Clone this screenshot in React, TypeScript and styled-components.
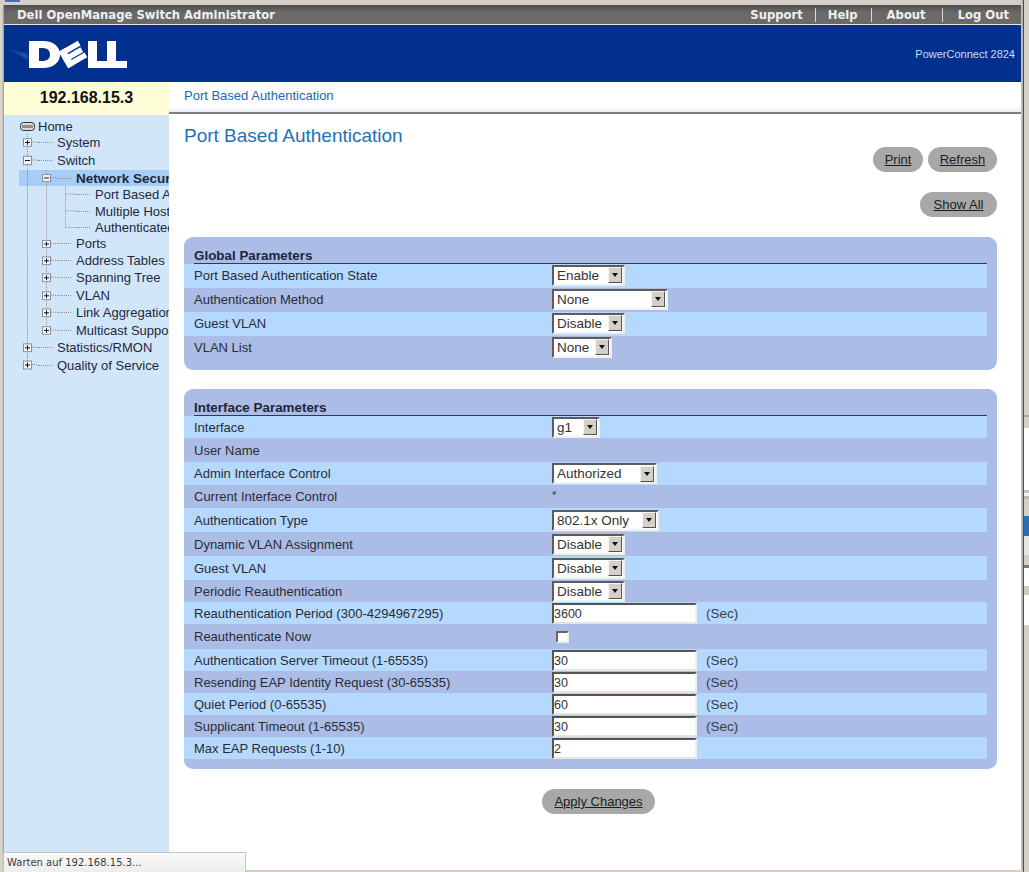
import React from "react";
import styled, { createGlobalStyle } from "styled-components";

const Global = createGlobalStyle`
  html, body { margin: 0; padding: 0; height: 872px; overflow: hidden; background: #d4d0c8; }
  * { box-sizing: border-box; }
  body { font-family: "Liberation Sans", Arial, sans-serif; }
`;

const Shell = styled.div`
  position: relative; width: 1029px; height: 872px; display: flex; overflow: hidden; background: #d4d0c8;
`;
const LeftEdge = styled.div`
  width: 4px; flex: none; background: linear-gradient(90deg, #d8d4cc 0, #d8d4cc 2px, #b9b6ae 3px, #8f8d88 4px);
`;
const WindowFrame = styled.div`
  width: 1017px; flex: none; display: flex; flex-direction: column; height: 870px;
`;
const TopStrip = styled.div`
  height: 5px; flex: none; background: #d4d0c8; margin-left: -4px; padding-left: 5px;
`;
const TabIcon = styled.div`
  width: 15px; height: 2px; background: #4a6fb8;
`;
const TitleBar = styled.div`
  height: 20px; flex: none; display: flex; align-items: center; justify-content: space-between;
  background: linear-gradient(#4e4e4e, #6a6a68 40%, #6a6a68); border-bottom: 1px solid #e6e6e6;
  color: #f0f0ee; font: bold 11.6px "DejaVu Sans", Verdana, sans-serif; padding-left: 13px;
`;
const AppName = styled.span`
  letter-spacing: 0;
`;
const NavList = styled.nav`
  display: flex; align-items: center; height: 100%;
`;
const NavItem = styled.span<{ $l: number; $r: number; $sep?: boolean }>`
  padding: 0 ${(p) => p.$r}px 0 ${(p) => p.$l}px; white-space: nowrap; height: 14px; line-height: 14px;
  border-right: ${(p) => (p.$sep ? "1px solid #d8d8d8" : "0")};
`;
const Brand = styled.header`
  height: 57px; flex: none; display: flex; align-items: center; justify-content: space-between;
  background: #01308f; padding-right: 6px;
`;
const Logo = styled.svg`
  width: 132px; height: 57px; display: block;
`;
const Model = styled.span`
  font-size: 11px; color: #c9dcf4;
`;
const Split = styled.div`
  flex: 1; display: flex; min-height: 0;
`;
const Side = styled.aside`
  width: 165px; flex: none; display: flex; flex-direction: column; overflow: hidden; background: #d2e6fa;
`;
const IpCell = styled.div`
  height: 33px; flex: none; background: #fdfdd8; display: flex; align-items: center; justify-content: center;
  font-size: 16px; font-weight: bold; color: #111; padding-bottom: 1px;
`;
const Tree = styled.div`
  padding: 3px 0 0 15px; width: 165px; color: #22283a; font-size: 13px;
`;
const TreeRow = styled.div<{ $h: number; $selected?: boolean; $bold?: boolean }>`
  display: flex; align-items: center; height: ${(p) => p.$h}px; white-space: nowrap;
  background: ${(p) => (p.$selected ? "#a6cdf6" : "transparent")};
  font-weight: ${(p) => (p.$bold ? "bold" : "normal")};
  font-size: ${(p) => (p.$bold ? 13.5 : 13)}px;
`;
const Glyph = styled.svg`
  width: 19px; height: 100%; flex: none; display: block;
`;
const Dots = styled.span`
  width: 14px; flex: none; border-top: 1px dotted #8d8d8d; margin-right: 5px;
`;
const HomeIcon = styled.svg`
  width: 17px; height: 12px; flex: none; display: block; margin-right: 2px;
`;
const Main = styled.main`
  flex: 1; min-width: 0; display: flex; flex-direction: column; background: #fff; position: relative;
`;
const Crumb = styled.div`
  height: 32px; flex: none; display: flex; align-items: center; padding: 0 0 3px 15px;
  color: #2367ad; font-size: 13px; background: linear-gradient(#fff 80%, #e9eef6);
  border-bottom: 2px solid #7f7f7f;
`;
const Body = styled.div`
  flex: 1; padding: 10px 24px 0 15px; display: flex; flex-direction: column; min-height: 0;
`;
const Title = styled.h1`
  margin: 0; height: 24px; line-height: 24px; font-size: 19px; font-weight: normal; color: #1d72b8;
`;
const ActionRow = styled.div<{ $top: number }>`
  display: flex; justify-content: flex-end; gap: 5px; margin-top: ${(p) => p.$top}px;
`;
const PillButton = styled.button<{ $w: number }>`
  width: ${(p) => p.$w}px; height: 25px; border: 0; border-radius: 13px; background: #a8a8a8; padding: 0;
  color: #1c1c1c; text-decoration: underline; font: 13px "Liberation Sans", Arial, sans-serif;
`;
const Panel = styled.section<{ $top: number; $h: number }>`
  flex: none; margin-top: ${(p) => p.$top}px; height: ${(p) => p.$h}px; background: #abbde6; border-radius: 9px;
  padding-right: 10px; display: flex; flex-direction: column; justify-content: flex-start;
`;
const PanelTitle = styled.div<{ $h: number }>`
  height: ${(p) => p.$h}px; flex: none; display: flex; align-items: flex-end; margin-left: 10px; padding-bottom: 1px;
  color: #1e2638; font-size: 13.4px; font-weight: bold; border-bottom: 1px solid #2c3a58; line-height: 13px;
`;
const Row = styled.div<{ $h: number; $alt: boolean; $lift?: boolean }>`
  height: ${(p) => p.$h}px; flex: none; display: flex; align-items: center;
  padding-bottom: ${(p) => (p.$lift ? 2 : 0)}px;
  background: ${(p) => (p.$alt ? "transparent" : "#b4d8fe")}; color: #2a2c33; font-size: 13px;
`;
const Label = styled.span`
  width: 368px; flex: none; padding-left: 10px; white-space: nowrap;
`;
const Select = styled.div<{ $w: number }>`
  width: ${(p) => p.$w}px; height: 21px; display: flex; align-items: center; justify-content: space-between;
  background: #fff; border: 2px solid; border-color: #5c5c5c #f0f0f0 #f0f0f0 #5c5c5c;
  padding: 0 1px 0 3px; font-size: 13.5px; color: #333;
`;
const Arrow = styled.span`
  width: 14px; height: 16px; flex: none; display: flex; align-items: center; justify-content: center; background: #d4d0c8;
  border: 1px solid; border-color: #f4f4f0 #55534e #55534e #f4f4f0;
  &::after { content: ""; border: 3.5px solid transparent; border-top: 4px solid #111; border-bottom: 0; }
`;
const TextField = styled.input`
  width: 145px; height: 21px; border: 2px solid; border-color: #555 #efefef #e4e4e4 #555;
  background: #fff; color: #333; padding: 2px 0 0; font: 12.5px "Liberation Sans", Arial, sans-serif; outline: 0;
`;
const Unit = styled.span`
  margin-left: 9px; font-size: 13.5px; color: #3a3c44;
`;
const Check = styled.span`
  width: 13px; height: 12px; margin-left: 4px; background: #fff; display: block;
  border: 2px solid; border-color: #666 #ececec #ececec #666;
`;
const Star = styled.span`
  font-size: 11px; line-height: 11px; margin-top: -2px; color: #333;
`;
const FormActions = styled.div`
  margin: 20px 0 0 358px;
`;
const Desktop = styled.div`
  flex: 1; display: flex; flex-direction: column; min-width: 0;
`;
const RightEdge = styled.div`
  width: 3px; flex: none; background: linear-gradient(90deg, #cfcdc6 0, #b4b2ab 1px, #b4b2ab 2px, #4e4e4c 2px);
`;
const Band = styled.div<{ $h: number; $c: string }>`
  height: ${(p) => p.$h}px; flex: none; background: ${(p) => p.$c};
`;
const Status = styled.div`
  position: absolute; left: 3px; bottom: 0; width: 243px; height: 20px; display: flex; align-items: center;
  padding-left: 3px; background: linear-gradient(#fafafa, #ededed); border: 1px solid #c4c4c0; border-bottom: 0;
  font: 10px "DejaVu Sans", Tahoma, sans-serif; color: #3a3a3a;
`;
const BottomEdge = styled.div`
  position: absolute; left: 0; right: 6px; bottom: 0; height: 2px; background: #d4d0c8;
`;

type Node = { label: string; h: number; cells: ("v" | "plus" | "minus" | "plusEnd" | "leaf" | "leafEnd")[]; sel?: boolean; bold?: boolean };

const tree: Node[] = [
  { label: "System", h: 17, cells: ["plus"] },
  { label: "Switch", h: 19, cells: ["minus"] },
  { label: "Network Security", h: 16, cells: ["v", "minus"], sel: true, bold: true },
  { label: "Port Based Authentication", h: 17, cells: ["v", "v", "leaf"] },
  { label: "Multiple Hosts", h: 16.5, cells: ["v", "v", "leaf"] },
  { label: "Authenticated Users", h: 16, cells: ["v", "v", "leafEnd"] },
  { label: "Ports", h: 16, cells: ["v", "plus"] },
  { label: "Address Tables", h: 17.5, cells: ["v", "plus"] },
  { label: "Spanning Tree", h: 17.5, cells: ["v", "plus"] },
  { label: "VLAN", h: 17.5, cells: ["v", "plus"] },
  { label: "Link Aggregation", h: 17.5, cells: ["v", "plus"] },
  { label: "Multicast Support", h: 17, cells: ["v", "plusEnd"] },
  { label: "Statistics/RMON", h: 17.5, cells: ["plus"] },
  { label: "Quality of Service", h: 18, cells: ["plusEnd"] },
];

const dash = { stroke: "#8d8d8d", strokeDasharray: "1 1", strokeWidth: 1 };

function TreeCell({ kind }: { kind: Node["cells"][number] }) {
  const hasBox = kind === "plus" || kind === "minus" || kind === "plusEnd";
  return (
    <Glyph viewBox="0 0 19 18" preserveAspectRatio="none">
      {kind === "v" && <line x1="8.5" y1="0" x2="8.5" y2="18" {...dash} />}
      {(kind === "plus" || kind === "minus") && <line x1="8.5" y1="0" x2="8.5" y2="18" {...dash} />}
      {kind === "plusEnd" && <line x1="8.5" y1="0" x2="8.5" y2="9" {...dash} />}
      {kind === "leaf" && <line x1="8.5" y1="0" x2="8.5" y2="18" {...dash} />}
      {kind === "leafEnd" && <line x1="8.5" y1="0" x2="8.5" y2="9" {...dash} />}
      {(kind === "leaf" || kind === "leafEnd") && <line x1="8.5" y1="8.5" x2="19" y2="8.5" {...dash} />}
      {hasBox && <line x1="13" y1="8.5" x2="19" y2="8.5" {...dash} />}
      {hasBox && (
        <g>
          <rect x="4.5" y="5" width="8" height="8" fill="#eef4fb" stroke="#8a8f98" />
          <line x1="6" y1="9" x2="11" y2="9" stroke="#111" />
          {kind !== "minus" && <line x1="8.5" y1="6.5" x2="8.5" y2="11.5" stroke="#111" />}
        </g>
      )}
    </Glyph>
  );
}

const globalRows = [
  { h: 24, label: "Port Based Authentication State", sel: "Enable", w: 73 },
  { h: 24, label: "Authentication Method", sel: "None", w: 116 },
  { h: 24, label: "Guest VLAN", sel: "Disable", w: 73 },
  { h: 24, label: "VLAN List", sel: "None", w: 60 },
];

type IfRow = { h: number; label: string; sel?: string; w?: number; input?: string; sec?: boolean; check?: boolean; star?: boolean };
const ifRows: IfRow[] = [
  { h: 22, label: "Interface", sel: "g1", w: 48 },
  { h: 24, label: "User Name" },
  { h: 23, label: "Admin Interface Control", sel: "Authorized", w: 105 },
  { h: 23, label: "Current Interface Control", star: true },
  { h: 24, label: "Authentication Type", sel: "802.1x Only", w: 107 },
  { h: 24, label: "Dynamic VLAN Assignment", sel: "Disable", w: 73 },
  { h: 24, label: "Guest VLAN", sel: "Disable", w: 73 },
  { h: 22, label: "Periodic Reauthentication", sel: "Disable", w: 73 },
  { h: 22, label: "Reauthentication Period (300-4294967295)", input: "3600", sec: true },
  { h: 25, label: "Reauthenticate Now", check: true },
  { h: 22, label: "Authentication Server Timeout (1-65535)", input: "30", sec: true },
  { h: 22, label: "Resending EAP Identity Request (30-65535)", input: "30", sec: true },
  { h: 22, label: "Quiet Period (0-65535)", input: "60", sec: true },
  { h: 22, label: "Supplicant Timeout (1-65535)", input: "30", sec: true },
  { h: 22, label: "Max EAP Requests (1-10)", input: "2" },
];

const bands: [number, string][] = [
  [415, "#d4d0c8"], [2, "#a8a6a0"], [11, "#d4d0c8"], [62, "#ffffff"], [3, "#c8c5bd"], [3, "#f4f4f2"], [3, "#bdbab3"],
  [17, "#d4d0c8"], [20, "#2f6cb0"], [16, "#e8e6e0"], [3, "#e8e6e0"], [10, "#d4d0c8"], [3, "#777"], [18, "#fff"], [9, "#cfccc4"], [30, "#fff"], [247, "#d4d0c8"],
];

export default function App() {
  return (
    <Shell>
      <Global />
      <LeftEdge />
      <WindowFrame>
        <TopStrip><TabIcon /></TopStrip>
        <TitleBar>
          <AppName>Dell OpenManage Switch Administrator</AppName>
          <NavList>
            <NavItem $l={14} $r={12} $sep>Support</NavItem>
            <NavItem $l={12} $r={13} $sep>Help</NavItem>
            <NavItem $l={15} $r={16} $sep>About</NavItem>
            <NavItem $l={15} $r={12}>Log Out</NavItem>
          </NavList>
        </TitleBar>
        <Brand>
          <Logo viewBox="0 0 132 57" role="img" aria-label="Dell logo">
            <defs>
              <linearGradient id="streak" x1="0" x2="1" y1="0" y2="0">
                <stop offset="0" stopColor="#3f78c8" stopOpacity="0" />
                <stop offset="0.8" stopColor="#4f88d0" stopOpacity="0.4" />
                <stop offset="1" stopColor="#4f88d0" stopOpacity="0.1" />
              </linearGradient>
            </defs>
            <path d="M0 22 L26 30 L26 36 Z" fill="url(#streak)" />
            <path fillRule="evenodd" fill="#fff" d="M25 16 H39 C50 16 56 22 56 29.5 C56 37 50 43 39 43 H25 Z M35 23 V36 H38 C43 36 46 34 46 29.5 C46 25 43 23 38 23 Z" />
            <g fill="#fff" transform="rotate(-30 69 29.5)">
              <rect x="58" y="20" width="7" height="19" />
              <rect x="58" y="20" width="22" height="5.5" />
              <rect x="58" y="27" width="21" height="5.5" />
              <rect x="58" y="33.5" width="22" height="5.5" />
            </g>
            <path fill="#fff" d="M84 16 H93 V36 H103 V16 H112 V36 H123 V43 H84 Z" />
          </Logo>
          <Model>PowerConnect 2824</Model>
        </Brand>
        <Split>
          <Side>
            <IpCell>192.168.15.3</IpCell>
            <Tree>
              <TreeRow $h={16}>
                <HomeIcon viewBox="0 0 17 12">
                  <rect x="1.5" y="2.5" width="14" height="8" rx="3" fill="#d8d8d8" stroke="#333" />
                  <rect x="3" y="5" width="11" height="3" fill="#8f8f8f" />
                </HomeIcon>
                Home
              </TreeRow>
              {tree.map((n) => (
                <TreeRow key={n.label} $h={n.h} $selected={n.sel} $bold={n.bold}>
                  {n.cells.map((c, i) => <TreeCell key={i} kind={c} />)}
                  <Dots />
                  {n.label}
                </TreeRow>
              ))}
            </Tree>
          </Side>
          <Main>
            <Crumb>Port Based Authentication</Crumb>
            <Body>
              <Title>Port Based Authentication</Title>
              <ActionRow $top={-1}>
                <PillButton $w={50}>Print</PillButton>
                <PillButton $w={69}>Refresh</PillButton>
              </ActionRow>
              <ActionRow $top={20}>
                <PillButton $w={77}>Show All</PillButton>
              </ActionRow>
              <Panel $top={20} $h={133}>
                <PanelTitle $h={27}>Global Parameters</PanelTitle>
                {globalRows.map((r, i) => (
                  <Row key={r.label} $h={r.h} $alt={i % 2 === 1} $lift>
                    <Label>{r.label}</Label>
                    <Select $w={r.w}>{r.sel}<Arrow /></Select>
                  </Row>
                ))}
              </Panel>
              <Panel $top={19} $h={380}>
                <PanelTitle $h={27}>Interface Parameters</PanelTitle>
                {ifRows.map((r, i) => (
                  <Row key={r.label} $h={r.h} $alt={i % 2 === 1}>
                    <Label>{r.label}</Label>
                    {r.sel && <Select $w={r.w!}>{r.sel}<Arrow /></Select>}
                    {r.input && <TextField readOnly value={r.input} />}
                    {r.sec && <Unit>(Sec)</Unit>}
                    {r.check && <Check />}
                    {r.star && <Star>*</Star>}
                  </Row>
                ))}
              </Panel>
              <FormActions>
                <PillButton $w={113}>Apply Changes</PillButton>
              </FormActions>
            </Body>
          </Main>
        </Split>
      </WindowFrame>
      <RightEdge />
      <Desktop>
        {bands.map(([h, c], i) => <Band key={i} $h={h} $c={c} />)}
      </Desktop>
      <BottomEdge />
      <Status>Warten auf 192.168.15.3...</Status>
    </Shell>
  );
}
